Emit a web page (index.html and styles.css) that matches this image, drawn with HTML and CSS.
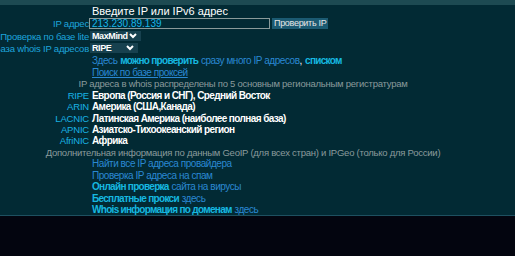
FILE: index.html
```html
<!DOCTYPE html>
<html lang="ru">
<head>
  <meta charset="UTF-8">
  <title>Whois IP</title>
  <link rel="stylesheet" href="styles.css">
</head>
<body>

<div class="topbar"></div>

<div class="main">
  <form class="whois">
    <div class="label"></div>
    <div class="value title">Введите IP или IPv6 адрес</div>

    <div class="label">IP адрес</div>
    <div class="value">
      <input type="text" class="ip" value="213.230.89.139">
      <button type="button" class="check">Проверить IP</button>
    </div>

    <div class="label">Проверка по базе lite</div>
    <div class="value">
      <span class="select sel-maxmind">MaxMind
        <svg class="chev" width="8" height="6" viewBox="0 0 8 6"><polyline points="1,1 4,4 7,1" fill="none" stroke="#fff" stroke-width="2"/></svg>
      </span>
    </div>

    <div class="label">База whois IP адресов</div>
    <div class="value">
      <span class="select sel-ripe">RIPE
        <svg class="chev" width="8" height="6" viewBox="0 0 8 6"><polyline points="1,1 4,4 7,1" fill="none" stroke="#fff" stroke-width="2"/></svg>
      </span>
    </div>

    <div class="label"></div>
    <div class="value">
      <a href="#" class="lnk">Здесь</a>&nbsp;<a href="#" class="lnk hi">можно проверить</a>&nbsp;<a href="#" class="lnk">сразу много IP адресов</a>,&nbsp;<a href="#" class="lnk hi">списком</a>
    </div>

    <div class="label"></div>
    <div class="value"><a href="#" class="lnk under">Поиск по базе проксей</a></div>

    <div class="center gray">IP адреса в whois распределены по 5 основным региональным регистратурам</div>

    <div class="label reg">RIPE</div>
    <div class="value region">Европа (Россия и СНГ), Средний Восток</div>

    <div class="label reg">ARIN</div>
    <div class="value region">Америка (США,Канада)</div>

    <div class="label reg">LACNIC</div>
    <div class="value region">Латинская Америка (наиболее полная база)</div>

    <div class="label reg">APNIC</div>
    <div class="value region">Азиатско-Тихоокеанский регион</div>

    <div class="label reg">AfriNIC</div>
    <div class="value region">Африка</div>

    <div class="center gray">Дополнительная информация по данным GeoIP (для всех стран) и IPGeo (только для России)</div>

    <div class="label"></div>
    <div class="value"><a href="#" class="lnk">Найти все IP адреса провайдера</a></div>

    <div class="label"></div>
    <div class="value"><a href="#" class="lnk">Проверка IP адреса на спам</a></div>

    <div class="label"></div>
    <div class="value"><a href="#" class="lnk hi">Онлайн проверка</a>&nbsp;<a href="#" class="lnk">сайта на вирусы</a></div>

    <div class="label"></div>
    <div class="value"><a href="#" class="lnk hi">Бесплатные прокси</a>&nbsp;<a href="#" class="lnk">здесь</a></div>

    <div class="label"></div>
    <div class="value"><a href="#" class="lnk hi">Whois информация по доменам</a>&nbsp;<a href="#" class="lnk">здесь</a></div>
  </form>
</div>

<div class="footer"></div>

</body>
</html>
```

FILE: styles.css
```css
html, body {
  margin: 0;
  height: 100%;
  overflow: hidden;
}
body {
  background: #03050f;
  font-family: 'Liberation Sans', Arial, sans-serif;
  font-size: 10px;
  color: #fff;
}
.topbar {
  height: 5px;
  background: #1d4a52;
}
.main {
  background: #022a34;
  border-bottom: 1px solid #1e5060;
}
.whois {
  display: grid;
  width: 486px;
  grid-template-columns: 89px 1fr;
  grid-template-rows: 11px 14px 12px 12px 12px 12px;
  grid-auto-rows: 11.45px;
  column-gap: 1px;
  margin: 0;
}
.label {
  display: flex;
  justify-content: flex-end;
  align-items: center;
  white-space: nowrap;
  color: #1ea5dc;
  font-size: 9.5px;
  letter-spacing: -0.2px;
}
.value {
  display: flex;
  align-items: center;
  white-space: nowrap;
  padding-left: 2px;
}
.title {
  font-size: 11px;
}
.ip {
  box-sizing: border-box;
  width: 181px;
  height: 11px;
  margin: 0 0 0 -3px;
  padding: 0 0 0 2px;
  border: 1px solid #8a9a9a;
  background: transparent;
  color: #17b6ea;
  font: 10px 'Liberation Sans', Arial, sans-serif;
  line-height: 9px;
}
.check {
  height: 11px;
  margin: 0 0 0 2px;
  padding: 0 2px;
  border: none;
  background: #1b5a72;
  color: #e6e6e6;
  font: 9px 'Liberation Sans', Arial, sans-serif;
  letter-spacing: -0.3px;
  line-height: 11px;
}
.select {
  display: inline-flex;
  align-items: center;
  justify-content: space-between;
  box-sizing: border-box;
  height: 10px;
  margin-left: -2px;
  padding: 0 3px 0 2px;
  background: #17414f;
  color: #fff;
  font-weight: bold;
  font-size: 9px;
  letter-spacing: -0.4px;
}
.sel-maxmind {
  width: 51px;
}
.sel-ripe {
  width: 48px;
}
.chev {
  display: block;
  margin-right: 1px;
}
.lnk {
  color: #2a88d2;
  text-decoration: none;
  font-size: 10px;
  letter-spacing: -0.45px;
}
.lnk.hi {
  color: #16b8e0;
  font-weight: bold;
  letter-spacing: -0.7px;
}
.under {
  text-decoration: underline;
}
.center {
  grid-column: 1 / 3;
  display: flex;
  justify-content: center;
  align-items: center;
  white-space: nowrap;
  font-size: 9.5px;
  letter-spacing: -0.25px;
}
.gray {
  color: #8a9a9c;
}
.reg {
  color: #19b2e4;
}
.region {
  color: #fff;
  font-weight: bold;
  font-size: 10px;
  letter-spacing: -0.6px;
}
```
